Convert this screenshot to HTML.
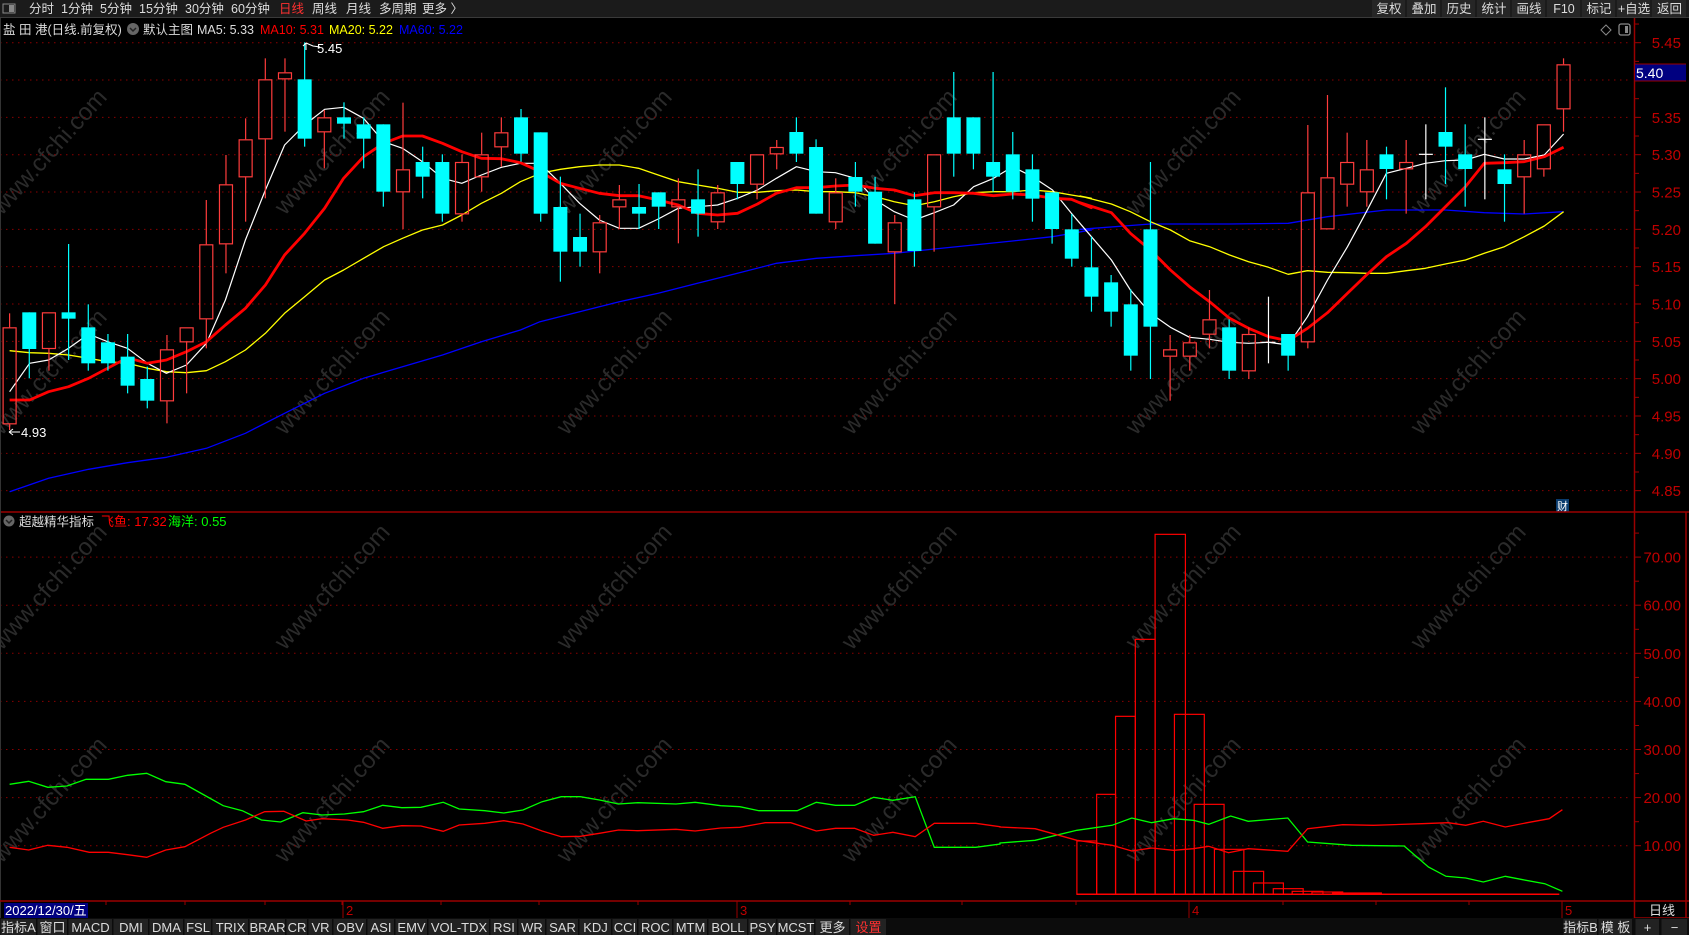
<!DOCTYPE html>
<html><head><meta charset="utf-8">
<style>
html,body{margin:0;padding:0;background:#000;width:1689px;height:935px;overflow:hidden}
svg{display:block}
text{font-family:"Liberation Sans","Noto Sans CJK SC",sans-serif}
</style></head><body>
<svg id="s" width="1689" height="935" viewBox="0 0 1689 935" xmlns="http://www.w3.org/2000/svg">
<rect width="1689" height="935" fill="#000"/>
<g id="wm" fill="#2a2a2a" font-size="24"></g>
<g id="grid"></g>
<g id="ind"></g>
<g id="ma"></g>
<g id="cdl"></g>
<g id="ui"></g>
</svg>
<script>
const NS="http://www.w3.org/2000/svg";
function el(parent,tag,attrs,txt){const e=document.createElementNS(NS,tag);for(const k in attrs)e.setAttribute(k,attrs[k]);if(txt!==undefined)e.textContent=txt;document.getElementById(parent).appendChild(e);return e;}
[55,338,620,905,1189,1474].forEach(x=>[157,377,592,805].forEach(y=>{el('wm','text',{x:x,y:y,'text-anchor':'middle',transform:`rotate(-48 ${x} ${y})`},'www.cfchi.com');}));
const py=p=>42.7+(5.45-p)/0.05*37.33;
for(let i=0;i<=12;i++){const p=4.85+i*0.05;const y=py(p);
 el('grid','line',{x1:0,y1:y,x2:1632,y2:y,stroke:'#8a0000','stroke-dasharray':'1.5 4.5','stroke-width':1});
 el('grid','line',{x1:1634,y1:y,x2:1641,y2:y,stroke:'#a00000'});
 el('grid','line',{x1:1634,y1:y-18.67,x2:1639,y2:y-18.67,stroke:'#a00000'});
 if(Math.abs(p-5.40)>0.001) el('grid','text',{x:1681,y:y+5.5,'text-anchor':'end','font-size':15,fill:'#c00000'},p.toFixed(2));
}
const iy=v=>845.7-(v-10)*4.81;
for(let v=10;v<=70;v+=10){const y=iy(v);
 el('grid','line',{x1:0,y1:y,x2:1632,y2:y,stroke:'#8a0000','stroke-dasharray':'1.5 4.5'});
 el('grid','line',{x1:1634,y1:y,x2:1641,y2:y,stroke:'#a00000'});
 el('grid','line',{x1:1634,y1:y-24,x2:1639,y2:y-24,stroke:'#a00000'});
 el('grid','text',{x:1681,y:y+5.5,'text-anchor':'end','font-size':15,fill:'#c00000'},v.toFixed(2));
}
const C=[
['R',892,1183,850,1200],['C',847,957,847,1045],['R',847,957,847,1022],['C',847,866,642,990],['C',892,1000,823,1022],
['C',937,1000,912,1022],['C',980,1067,912,1090],['C',1047,1112,1010,1135],['R',958,1114,915,1180],['R',892,937,892,1090],
['R',643,868,510,955],['R',463,643,375,730],['R',328,442,265,575],['R',148,328,85,505],['R',127,148,85,305],
['C',148,326,37,350],['R',262,307,240,415],['C',262,281,217,326],['C',283,326,262,415],['C',283,485,283,530],
['R',418,487,218,597],['C',396,440,350,505],['C',396,551,373,575],['R',396,553,373,575],['R',373,442,308,485],
['R',307,352,262,410],['C',262,371,237,395],['C',307,551,307,575],
['C',531,665,440,755],['C',621,665,551,710],['R',577,667,555,730],['R',508,532,465,597],['C',531,551,462,597],
['C',487,530,487,597],['R',508,532,445,640],['C',508,551,418,620],['R',487,577,465,597],['C',396,462,396,508],
['R',373,464,373,508],['R',351,373,330,418],['C',306,371,262,396],['C',351,551,328,551],['R',487,577,445,597],
['C',441,485,396,530],['C',485,641,441,641],['R',577,667,555,822],['C',508,663,487,710],['R',373,532,373,665],
['C',262,371,126,440],['C',262,371,262,418],['C',396,440,126,485],['C',373,485,306,508],['C',418,506,373,575],
['C',487,597,487,641],['C',598,686,552,710],['C',712,800,620,845],
['C',757,845,735,890],['C',823,977,778,1022],['C',598,890,396,1047],['R',958,980,915,1112],['R',937,980,915,1022],
['R',868,914,780,955],['C',892,1022,868,1047],['R',912,1024,892,1047],['W',937,937,800,1000],['C',912,977,912,1022],
['R',487,937,285,955],['R',442,598,195,598],['R',396,464,308,530],['R',418,487,330,530],['C',373,417,350,508],
['R',396,418,330,551],['W',373,373,283,508],['C',306,350,172,462],['C',373,417,283,530],['W',328,328,262,508],
['C',418,462,373,575],['R',373,442,330,551],['R',283,418,283,440],['R',103,238,85,305]];
const zy=z=>z/3+30;
C.forEach((c,i)=>{const x=9.6+i*19.67;const t=zy(c[1]),b=zy(c[2]),h=zy(c[3]),l=zy(c[4]);
 if(c[0]==='C'){el('cdl','line',{x1:x,y1:h,x2:x,y2:l,stroke:'#00ffff','stroke-width':1.2});el('cdl','rect',{x:x-7,y:t,width:14,height:Math.max(b-t,1),fill:'#00ffff'});}
 else if(c[0]==='R'){if(t-h>0.5)el('cdl','line',{x1:x,y1:h,x2:x,y2:t,stroke:'#ff3c3c','stroke-width':1.2});if(l-b>0.5)el('cdl','line',{x1:x,y1:b,x2:x,y2:l,stroke:'#ff3c3c','stroke-width':1.2});el('cdl','rect',{x:x-6.5,y:t+0.5,width:13,height:Math.max(b-t-1,1),fill:'none',stroke:'#ff3c3c','stroke-width':1.2});}
 else {el('cdl','line',{x1:x,y1:h,x2:x,y2:l,stroke:'#fff','stroke-width':1.2});el('cdl','line',{x1:x-7,y1:t,x2:x+7,y2:t,stroke:'#fff','stroke-width':1.2});}
});
function line(chunks,color,w){let pts=[];chunks.forEach(ch=>{ch[2].forEach(p=>pts.push([(p[0]/ch[1]+ch[0]).toFixed(1),(p[1]/3+ch[3]).toFixed(1)]));});
 el('ma','polyline',{points:pts.map(p=>p.join(',')).join(' '),fill:'none',stroke:color,'stroke-width':w,'stroke-linejoin':'round'});}
const ma5=[[0,2.8,[[27,1085],[83,1000],[136,990],[192,955],[248,912],[301,935],[357,955],[413,1000],[466,1030],[522,1005],[578,940],[631,810],[687,630],[743,480],[797,345],[853,285],[909,238],[962,232],[1018,265],[1074,335],[1127,355],[1183,395],[1239,445],[1293,460],[1348,435],[1404,412],[1457,400],[1513,400]],30],
[540,2.8,[[0,400],[57,460],[111,520],[166,570],[222,595],[276,595],[331,567],[387,535],[441,530],[497,525],[553,505],[609,480],[662,445],[718,410],[774,425],[827,428],[883,445],[939,510],[992,545],[1048,570],[1104,548],[1158,525],[1214,470],[1270,445],[1323,410],[1379,440],[1435,480],[1488,550],[1544,620]],30],
[1080,2.8,[[32,620],[88,690],[141,780],[197,850],[253,892],[307,922],[363,928],[419,937],[472,940],[528,937],[583,945],[637,860],[693,750],[749,650],[802,545],[858,430],[914,415],[967,400],[1023,392],[1079,390],[1132,373],[1188,387],[1244,387],[1300,375],[1354,312]],30]];
const ma10=[[0,2.8,[[27,1110],[83,1110],[136,1085],[192,1070],[248,1045],[301,1015],[357,983],[413,1000],[466,990],[522,965],[578,935],[631,885],[687,835],[743,765],[797,675],[853,610],[909,535],[962,445],[1018,380],[1074,340],[1127,318],[1183,318],[1239,340],[1293,365],[1348,385],[1404,386],[1457,398],[1513,425]],30],
[540,2.8,[[0,425],[57,460],[111,475],[166,490],[222,497],[276,497],[331,510],[387,525],[441,550],[497,555],[553,550],[609,522],[662,490],[718,473],[774,473],[827,468],[883,465],[939,475],[992,480],[1048,497],[1104,488],[1158,488],[1214,490],[1270,497],[1323,492],[1379,495],[1435,505],[1488,508],[1544,533]],30],
[1080,2.8,[[0,518],[88,548],[141,610],[197,660],[253,720],[307,770],[363,815],[419,865],[472,895],[528,920],[583,932],[637,895],[693,848],[749,790],[802,735],[858,680],[914,640],[967,590],[1023,530],[1079,470],[1132,400],[1188,398],[1244,395],[1300,380],[1354,352]],30]];
const ma20=[[0,2.8,[[27,962],[83,968],[136,970],[192,975],[248,985],[301,995],[357,1000],[413,1015],[466,1025],[522,1028],[578,1022],[631,995],[687,960],[743,910],[797,850],[853,800],[909,750],[962,720],[1018,685],[1074,650],[1127,625],[1183,600],[1239,585],[1293,555],[1348,520],[1404,490],[1457,455],[1513,430]],30],
[540,2.8,[[0,430],[57,418],[111,410],[166,405],[222,405],[276,415],[331,435],[387,455],[441,465],[497,475],[553,487],[609,487],[662,482],[718,480],[774,485],[827,485],[883,488],[939,500],[992,515],[1048,527],[1104,515],[1158,500],[1214,488],[1270,485],[1323,485],[1379,480],[1435,485],[1488,495],[1544,505]],30],
[1080,2.8,[[0,498],[88,522],[141,545],[197,575],[253,600],[307,632],[363,650],[419,675],[472,695],[528,712],[583,733],[637,722],[693,727],[749,728],[802,730],[858,730],[914,722],[967,715],[1023,702],[1079,690],[1132,670],[1188,650],[1244,620],[1300,588],[1354,545]],30]];
const ma60=[[0,2.8,[[27,1385],[136,1345],[248,1318],[357,1298],[466,1282],[578,1255],[687,1210],[797,1150],[909,1090],[1018,1045],[1127,1010],[1239,975],[1348,935],[1457,900]],30],
[540,2.8,[[0,875],[111,845],[222,815],[331,790],[441,760],[553,730],[662,700],[774,685],[883,677],[992,670],[1104,657],[1214,645],[1323,633],[1435,620],[1544,600]],30],
[1080,2.8,[[0,598],[197,582],[419,582],[583,580],[693,560],[858,540],[1023,540],[1132,548],[1244,552],[1354,545]],30]];
line(ma60,'#0000ff',1.3);line(ma20,'#ffff00',1.3);line(ma5,'#ffffff',1.2);line(ma10,'#ff0000',2.8);
[[175,220,987],[220,263,847],[263,308,613],[308,353,382],[353,422,67],[397,465,607],[442,510,877],[488,555,1012],[531,600,1078],[577,645,1113],[622,690,1130],[665,735,1138],[710,780,1140],[757,868,1143]].forEach(b=>{
 const x1=b[0]/2.276+1000,x2=b[1]/2.276+1000,t=b[2]/3+512;el('ind','rect',{x:x1,y:t,width:x2-x1,height:894.3-t,fill:'none',stroke:'#ff0000','stroke-width':1.2});});
el('ind','line',{x1:1000+175/2.276,y1:894.3,x2:1000+1273/2.276,y2:894.3,stroke:'#ff0000','stroke-width':1.5});
function iline(chunks,color){let pts=[];chunks.forEach(ch=>ch[2].forEach(p=>pts.push((p[0]/ch[1]+ch[0]).toFixed(1)+','+(p[1]/3+ch[3]).toFixed(1))));
 el('ind','polyline',{points:pts.join(' '),fill:'none',stroke:color,'stroke-width':1.3});}
iline([[0,1.568,[[15,133],[45,124],[75,142],[105,138],[135,118],[170,118],[200,106],[230,100],[260,125],[290,133],[320,165],[350,197],[380,212],[410,240],[440,246],[475,218],[505,225],[540,222],[570,215],[600,196],[630,203],[660,202],[695,187],[720,207],[760,212],[790,219],[820,210],[850,185],[880,170],[910,170],[940,180],[970,192],[1000,188],[1060,192],[1090,187],[1130,197],[1160,200],[1190,212],[1250,212],[1280,187],[1310,196],[1340,196],[1370,172],[1400,181],[1435,170],[1465,322],[1530,322],[1568,312]],740],
 [1000,2.276,[[0,993],[80,985],[175,955],[255,940],[300,918],[345,932],[395,920],[440,925],[475,937],[525,912],[565,928],[655,918],[700,990],[800,1000],[920,1002],[975,1065],[1015,1093],[1060,1098],[1100,1110],[1150,1093],[1190,1103],[1240,1115],[1280,1138]],512]],'#00ff00');
iline([[0,1.568,[[15,322],[45,330],[75,316],[105,322],[140,337],[170,337],[200,344],[230,352],[260,330],[290,320],[330,280],[350,262],[385,240],[415,215],[445,214],[480,243],[505,236],[545,240],[570,247],[600,265],[630,257],[660,258],[695,274],[720,255],[760,250],[790,242],[820,252],[850,273],[880,290],[910,289],[940,280],[970,270],[1000,272],[1060,268],[1090,273],[1130,264],[1160,262],[1200,248],[1240,248],[1280,273],[1310,265],[1340,265],[1370,286],[1400,277],[1435,290],[1465,250],[1530,250],[1568,260]],740],
 [1000,2.276,[[0,945],[80,950],[175,985],[255,1000],[300,1017],[345,1008],[395,1015],[440,1010],[475,1003],[520,1022],[565,1010],[655,1018],[700,950],[780,938],[850,940],[960,935],[1020,932],[1060,940],[1100,928],[1150,945],[1200,932],[1250,920],[1280,893]],512]],'#ff0000');
const U=(t,a,x)=>el('ui',t,a,x);
U('rect',{x:0,y:0,width:1689,height:17,fill:'#1b1b1b'});
U('line',{x1:0,y1:17.5,x2:1689,y2:17.5,stroke:'#3a3a3a'});
U('rect',{x:3,y:4,width:12,height:9,fill:'none',stroke:'#888','stroke-width':1});
U('rect',{x:9,y:5,width:5,height:7,fill:'#888'});
const tops=[['分时',29],['1分钟',61],['5分钟',100],['15分钟',139],['30分钟',185],['60分钟',231],['日线',279,'#ff3030'],['周线',312],['月线',346],['多周期',379],['更多 〉',422]];
tops.forEach(t=>U('text',{x:t[1],y:13,'font-size':12.5,fill:t[2]||'#ddd'},t[0]));
const rb=[['复权',1372,1406],['叠加',1407,1441],['历史',1442,1476],['统计',1477,1511],['画线',1512,1546],['F10',1547,1581],['标记',1582,1616],['+自选',1617,1651],['返回',1652,1687]];
rb.forEach(b=>{U('rect',{x:b[1],y:0,width:b[2]-b[1]-1,height:17,fill:'#262626'});U('text',{x:(b[1]+b[2])/2,y:13,'font-size':12.5,fill:'#ddd','text-anchor':'middle'},b[0]);});
U('text',{x:3,y:34,'font-size':12.5,fill:'#ddd'},'盐 田 港(日线.前复权)');
U('circle',{cx:133,cy:29,r:6,fill:'#666'});
U('path',{d:'M130 28 L133 31 L136 28',stroke:'#222',fill:'none','stroke-width':1.5});
U('text',{x:143,y:34,'font-size':12.5,fill:'#ddd'},'默认主图');
U('text',{x:197,y:34,'font-size':12.5,fill:'#ddd'},'MA5: 5.33');
U('text',{x:260,y:34,'font-size':12.5,fill:'#ff0000'},'MA10: 5.31');
U('text',{x:329,y:34,'font-size':12.5,fill:'#ffff00'},'MA20: 5.22');
U('text',{x:399,y:34,'font-size':12.5,fill:'#0000ff'},'MA60: 5.22');
U('path',{d:'M306 50 L306 43 M306 43 L303 46 M306 43 L313 46 L320 47',stroke:'#fff',fill:'none','stroke-width':1});
U('text',{x:317,y:53,'font-size':13,fill:'#fff'},'5.45');
U('path',{d:'M9 432 L20 432 M9 432 L13 429 M9 432 L13 435',stroke:'#fff',fill:'none','stroke-width':1});
U('text',{x:21,y:437,'font-size':13,fill:'#fff'},'4.93');
U('line',{x1:1634.5,y1:18,x2:1634.5,y2:918,stroke:'#9a0000','stroke-width':1.5});
U('line',{x1:1686,y1:512,x2:1686,y2:918,stroke:'#9a0000','stroke-width':1.5});
U('rect',{x:1635,y:64,width:51,height:17,fill:'#000080'});
U('line',{x1:1635,y1:64,x2:1686,y2:64,stroke:'#9a0000'});
U('line',{x1:1635,y1:81,x2:1686,y2:81,stroke:'#9a0000'});
U('text',{x:1636,y:78,'font-size':14,fill:'#fff'},'5.40');
U('path',{d:'M1606 25 L1611 30 L1606 35 L1601 30 Z',stroke:'#888',fill:'none'});
U('rect',{x:1619,y:24,width:11,height:11,rx:2,stroke:'#888',fill:'none','stroke-width':1.3});
U('rect',{x:1625,y:26,width:3,height:7,fill:'#888'});
U('rect',{x:1556,y:499,width:13,height:13,fill:'#0a3c6e'});
U('text',{x:1562.5,y:510,'font-size':11,fill:'#fff','text-anchor':'middle'},'财');
U('line',{x1:0,y1:512,x2:1689,y2:512,stroke:'#9a0000','stroke-width':1.5});
U('line',{x1:0.5,y1:18,x2:0.5,y2:918,stroke:'#333'});
U('circle',{cx:9,cy:521,r:5.5,fill:'#666'});
U('path',{d:'M6 520 L9 523 L12 520',stroke:'#222',fill:'none','stroke-width':1.5});
U('text',{x:19,y:526,'font-size':12.5,fill:'#ddd'},'超越精华指标');
U('text',{x:101,y:526,'font-size':13,fill:'#ff0000'},'飞鱼: 17.32');
U('text',{x:168,y:526,'font-size':13,fill:'#00ff00'},'海洋: 0.55');
U('line',{x1:0,y1:901,x2:1689,y2:901,stroke:'#9a0000','stroke-width':1.5});
U('line',{x1:1635,y1:918,x2:1689,y2:918,stroke:'#9a0000','stroke-width':1.5});
[106,185,265,342,441,539,638,737,850,962,1076,1189,1283,1376,1469,1562].forEach(x=>U('line',{x1:x,y1:901,x2:x,y2:905,stroke:'#9a0000'}));
[[343,'2'],[737,'3'],[1189,'4'],[1562,'5']].forEach(m=>{U('line',{x1:m[0],y1:901,x2:m[0],y2:918,stroke:'#9a0000'});U('text',{x:m[0]+3,y:915,'font-size':13,fill:'#c00000'},m[1]);});
U('rect',{x:4,y:903,width:84,height:15,fill:'#000080'});
U('text',{x:5,y:915,'font-size':13,fill:'#fff'},'2022/12/30/五');
U('text',{x:1662,y:915,'font-size':13,fill:'#ddd','text-anchor':'middle'},'日线');
U('rect',{x:0,y:918,width:1689,height:17,fill:'#0c0c0c'});
const tabs=[['指标A',0,37],['窗口',37,68],['MACD',68,113],['DMI',113,149],['DMA',149,184],['FSL',184,212],['TRIX',212,249],['BRAR',249,286],['CR',286,308],['VR',308,333],['OBV',333,367],['ASI',367,395],['EMV',395,428],['VOL-TDX',428,490],['RSI',490,518],['WR',518,546],['SAR',546,579],['KDJ',579,612],['CCI',612,638],['ROC',638,673],['MTM',673,708],['BOLL',708,748],['PSY',748,777],['MCST',777,815],['更多',815,850],['设置',850,887,'#ff3030'],['指标B',1563,1598],['模 板',1598,1633],['+',1635,1660],['−',1661,1688]];
tabs.forEach(t=>{U('rect',{x:t[1]+0.5,y:919,width:t[2]-t[1]-1.5,height:16,fill:'#222'});U('text',{x:(t[1]+t[2])/2,y:932,'font-size':13,fill:t[3]||'#ddd','text-anchor':'middle'},t[0]);});
</script>
</body></html>
